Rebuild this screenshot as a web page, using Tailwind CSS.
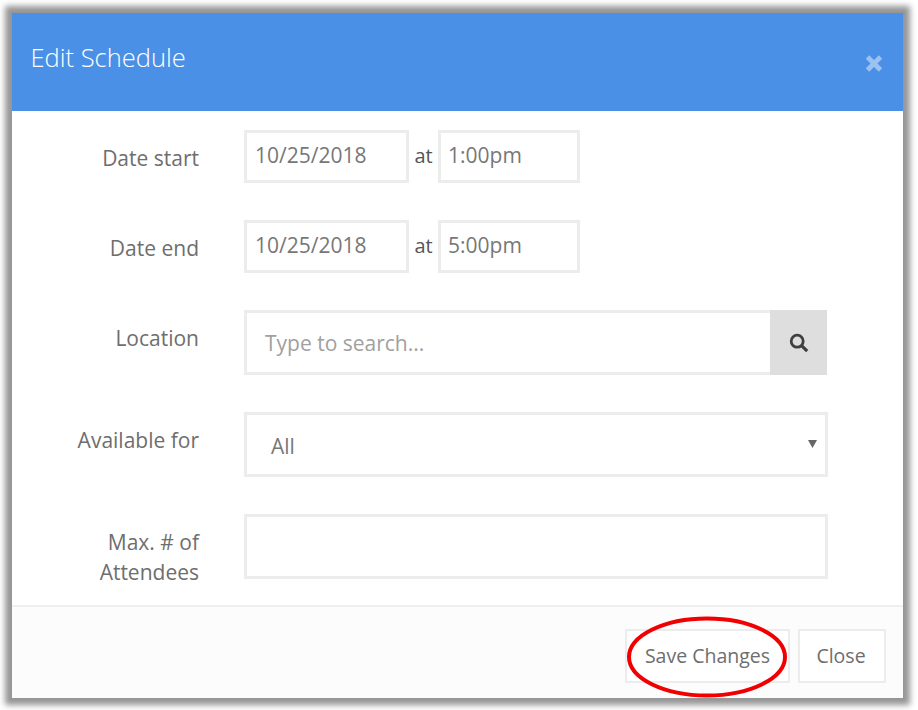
<!DOCTYPE html>
<html lang="en">
<head>
    <title>Edit Schedule</title>
    <meta charset="utf-8">
    <script src="https://cdn.jsdelivr.net/npm/@tailwindcss/browser@4"></script>
</head>
<body class="w-[918px] h-[710px] overflow-hidden bg-white font-['Open_Sans',sans-serif]">
    <div class="relative ml-[12px] mt-[13px] flex h-[685px] w-[891px] flex-col bg-white shadow-[0_0_6px_7px_rgba(0,0,0,0.42)]">
        <!-- header -->
        <div class="flex h-[98px] shrink-0 items-start justify-between bg-[#4a90e6] pl-[18.5px] pr-[19px]">
            <h1 class="mt-[26px] text-[25.5px] leading-[36px] font-light text-white">Edit Schedule</h1>
            <svg class="mt-[41px]" width="19" height="19" viewBox="0 0 19 19">
                <path d="M2.5 3L15.5 16M15.5 3L2.5 16" stroke="#9cc2f1" stroke-width="4.8" fill="none"/>
            </svg>
        </div>

        <!-- form -->
        <div class="flex flex-1 flex-col gap-[37px] pt-[19px] text-[21px] leading-[30px] text-[#6e6e6e]">
            <div class="flex">
                <label class="w-[187px] pt-[13px] text-right">Date start</label>
                <div class="ml-[45px] flex items-center text-[#777]">
                    <div class="flex h-[53px] w-[165px] items-center border-[3px] border-[#ececec] pb-[4px] pl-[8px]">10/25/2018</div>
                    <span class="w-[29px] pb-[1px] text-center text-[20px] text-[#555]">at</span>
                    <div class="flex h-[53px] w-[142px] items-center border-[3px] border-[#ececec] pb-[4px] pl-[7px]">1:00pm</div>
                </div>
            </div>
            <div class="flex">
                <label class="w-[187px] pt-[13px] text-right">Date end</label>
                <div class="ml-[45px] flex items-center text-[#777]">
                    <div class="flex h-[53px] w-[165px] items-center border-[3px] border-[#ececec] pb-[4px] pl-[8px]">10/25/2018</div>
                    <span class="w-[29px] pb-[1px] text-center text-[20px] text-[#555]">at</span>
                    <div class="flex h-[53px] w-[142px] items-center border-[3px] border-[#ececec] pb-[4px] pl-[7px]">5:00pm</div>
                </div>
            </div>
            <div class="flex">
                <label class="w-[187px] pt-[13px] text-right">Location</label>
                <div class="ml-[45px] flex h-[65px] w-[583px] border-[3px] border-[#ececec]">
                    <div class="flex flex-1 items-center pt-[1px] pl-[18px] text-[#a0a0a0]">Type to search...</div>
                    <div class="-my-[3px] -mr-[3px] flex w-[57px] items-center justify-center bg-[#dedede]">
                        <svg width="20" height="20" viewBox="0 0 20 20" fill="none" stroke="#3f3f3f">
                            <circle cx="8.2" cy="8.2" r="6" stroke-width="2.8"/>
                            <path d="M12.8 12.8L18.2 18.2" stroke-width="3.2"/>
                        </svg>
                    </div>
                </div>
            </div>
            <div class="flex">
                <label class="w-[187px] pt-[13px] text-right">Available for</label>
                <div class="ml-[45px] flex h-[65px] w-[584px] items-center justify-between border-[3px] border-[#ececec] pr-[8px] pl-[24px] text-[#777]">
                    <span class="pt-[3px]">All</span>
                    <svg class="mb-[2px]" width="9" height="8" viewBox="0 0 9 8"><path d="M0 0H9L4.5 8Z" fill="#666"/></svg>
                </div>
            </div>
            <div class="flex">
                <label class="w-[187px] pt-[13px] text-right">Max. # of<br>Attendees</label>
                <div class="ml-[45px] h-[65px] w-[584px] border-[3px] border-[#ececec]"></div>
            </div>
        </div>

        <!-- footer -->
        <div class="flex h-[93px] shrink-0 items-start justify-end gap-[8px] border-t-2 border-[#efefef] bg-[#fcfcfc] pt-[22px] pr-[17px] text-[19.5px] text-[#6e6e6e]">
            <div class="flex h-[54px] w-[165px] items-center justify-center border-[2px] border-[#ececec] bg-white">Save Changes</div>
            <div class="flex h-[54px] w-[88px] items-center justify-center border-[2px] border-[#ececec] bg-white pr-[2px]">Close</div>
        </div>

        <!-- red annotation circled over the save button -->
        <svg class="absolute top-[603px] left-[614px]" width="164" height="84" viewBox="0 0 164 84" fill="none">
            <ellipse cx="81" cy="41" rx="78" ry="38.5" stroke="#f00000" stroke-width="4"/>
        </svg>
    </div>
</body>
</html>
